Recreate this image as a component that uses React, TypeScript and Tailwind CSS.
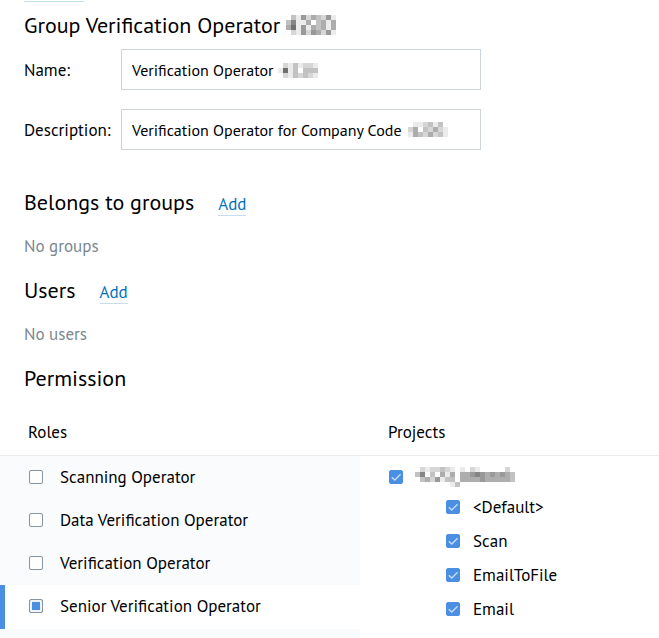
import React, { useState } from "react";

const roles = ["Scanning Operator", "Data Verification Operator", "Verification Operator", "Senior Verification Operator"];
const projects = ["<Default>", "Scan", "EmailToFile", "Email"];

// Each digit is a shade, 0 = white, 9 = darkest
const masks = {
  title: ["0315243251", "3611403414", "4715143414", "0215254251"],
  name: ["02131221", "17130333", "02132321"],
  description: ["01123130", "24032421", "14324231"],
  project: ["02122321010210000020", "36030414044565454543", "03425133044445444443", "00000001300000000000"],
};

function Mask({ rows, className = "" }: { rows: string[]; className?: string }) {
  const w = rows[0].length * 5;
  const h = rows.length * 5;
  return (
    <svg width={w} height={h} viewBox={`0 0 ${w} ${h}`} shapeRendering="crispEdges" aria-hidden="true" className={className}>
      {rows.map((row, y) =>
        row.split("").map((v, x) => (
          <rect key={`${x}-${y}`} x={x * 5} y={y * 5} width="5" height="5" fill="#000" fillOpacity={Number(v) * 0.08} />
        ))
      )}
    </svg>
  );
}

function Tick({ id, checked, onChange, label }: { id: string; checked: boolean; onChange: () => void; label?: string }) {
  return (
    <span className="relative flex size-[14px] shrink-0">
      <input
        id={id}
        type="checkbox"
        checked={checked}
        onChange={onChange}
        aria-label={label}
        className="size-[14px] appearance-none rounded-[2px] border border-[#8795a1] bg-white checked:border-[#4a8fe2] checked:bg-[#4a8fe2]"
      />
      {checked && (
        <svg viewBox="0 0 14 14" className="pointer-events-none absolute inset-0 size-[14px]">
          <path d="M2.8 7.2 5.8 10 11.6 4.2" fill="none" stroke="#c5dcf6" strokeWidth="1.4" />
        </svg>
      )}
    </span>
  );
}

function Section({ title, empty }: { title: string; empty: string }) {
  return (
    <section className="h-[88px]">
      <div className="flex items-baseline gap-6">
        <h2 className="text-[22px] leading-7">{title}</h2>
        <a href="#add" className="border-b border-[#c4dff0] text-[17px] leading-[22px] text-[#0072bc]">
          Add
        </a>
      </div>
      <p className="mt-[18px] text-[17px] leading-6 text-[#7b8791]">{empty}</p>
    </section>
  );
}

export default function App() {
  const [name, setName] = useState("Verification Operator");
  const [description, setDescription] = useState("Verification Operator for Company Code");
  const [checkedRoles, setCheckedRoles] = useState<string[]>([]);
  const [checkedProjects, setCheckedProjects] = useState<string[]>(["root", ...projects]);

  const toggle = (list: string[], item: string) =>
    list.includes(item) ? list.filter((i) => i !== item) : [...list, item];

  const fieldClass = "h-[41px] w-full border border-[#cdd5da] bg-white px-[10px] text-base text-black outline-none";

  return (
    <main className="min-h-screen overflow-hidden bg-white font-['PT_Sans','Noto_Sans',sans-serif] text-black">
      <div className="px-6">
        <div className="h-[2px] w-[60px] border-b border-[#c4dff0]" />
        <div className="mt-[9px] flex items-center gap-[6px]">
          <h1 className="text-[22px] leading-7">Group Verification Operator</h1>
          <Mask rows={masks.title} />
        </div>

        <form className="mt-[10px] grid max-w-[457px] grid-cols-[97px_1fr] items-center gap-y-[19px] text-[17px]">
          <label htmlFor="name" className="pt-[3px]">Name:</label>
          <div className="relative">
            <input id="name" value={name} onChange={(e) => setName(e.target.value)} className={fieldClass} />
            <Mask rows={masks.name} className="absolute left-[157px] top-[14px]" />
          </div>
          <label htmlFor="description" className="pt-[3px]">Description:</label>
          <div className="relative">
            <input id="description" value={description} onChange={(e) => setDescription(e.target.value)} className={fieldClass} />
            <Mask rows={masks.description} className="absolute left-[287px] top-[13px]" />
          </div>
        </form>

        <div className="mt-[38px]">
          <Section title="Belongs to groups" empty="No groups" />
          <Section title="Users" empty="No users" />
          <h2 className="text-[22px] leading-7">Permission</h2>
        </div>
      </div>

      <div className="mt-[17px] grid grid-cols-[360px_1fr] border-b border-[#e9edf0] text-[17px] leading-[46px]">
        <h3 className="pl-7">Roles</h3>
        <h3 className="pl-7">Projects</h3>
      </div>
      <div className="grid grid-cols-[360px_1fr] text-[17px] leading-6">
        <ul className="bg-[#f9fbfd]">
          {roles.map((role) => {
            const active = role === "Senior Verification Operator";
            return (
              <li
                key={role}
                className={`flex items-center gap-[17px] border-l-[5px] pb-[2px] pl-6 ${
                  active ? "h-11 border-[#4a8fe2] bg-white" : "h-[43px] border-transparent"
                }`}
              >
                {active ? (
                  <input
                    id={role}
                    type="checkbox"
                    defaultChecked
                    className="size-[14px] shrink-0 appearance-none rounded-[2px] border border-[#8795a1] bg-white checked:bg-[#4a8fe2] checked:shadow-[inset_0_0_0_2px_#edf4fc]"
                  />
                ) : (
                  <Tick id={role} checked={checkedRoles.includes(role)} onChange={() => setCheckedRoles(toggle(checkedRoles, role))} />
                )}
                <label htmlFor={role}>{role}</label>
              </li>
            );
          })}
          <li className="h-[10px]" />
        </ul>
        <div className="pl-[29px] pt-[7px]">
          <div className="flex h-[27px] items-center gap-3">
            <Tick
              id="root"
              label="Project group"
              checked={checkedProjects.includes("root")}
              onChange={() => setCheckedProjects(toggle(checkedProjects, "root"))}
            />
            <Mask rows={masks.project} />
          </div>
          <ul className="pl-[57px]">
            {projects.map((project) => (
              <li key={project} className="flex h-[34px] items-center gap-[13px]">
                <Tick
                  id={project}
                  checked={checkedProjects.includes(project)}
                  onChange={() => setCheckedProjects(toggle(checkedProjects, project))}
                />
                <label htmlFor={project}>{project}</label>
              </li>
            ))}
          </ul>
        </div>
      </div>
    </main>
  );
}
